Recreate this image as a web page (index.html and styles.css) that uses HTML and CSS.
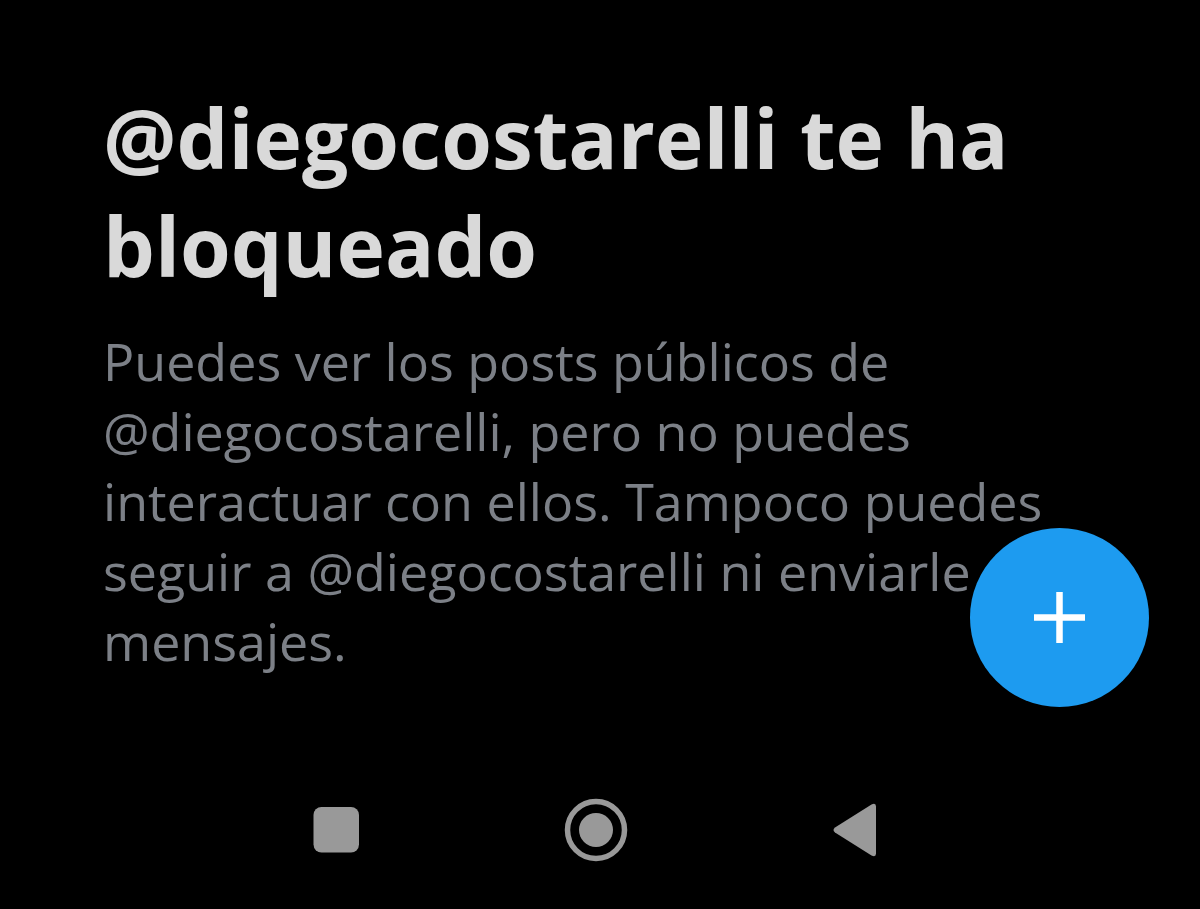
FILE: index.html
```
<!DOCTYPE html>
<html lang="es">

<head>
    <meta charset="UTF-8">
    <meta name="viewport" content="width=device-width, initial-scale=1.0">
    <title>Perfil</title>
    <link rel="stylesheet" href="styles.css">
</head>

<body>
    <main class="notice">
        <h1 class="notice-title">@diegocostarelli te ha bloqueado</h1>
        <p class="notice-text">Puedes ver los posts públicos de @diegocostarelli, pero no puedes interactuar con ellos. Tampoco puedes seguir a @diegocostarelli ni enviarle mensajes.</p>
        <button class="compose" type="button" aria-label="Nuevo post">
            <svg width="51" height="51" viewBox="0 0 51 51">
                <path d="M25.500 0v51M0 25.500h51" stroke="#fff" stroke-width="6.500" />
            </svg>
        </button>
    </main>
    <nav class="system-bar">
        <button type="button" aria-label="Recientes">
            <svg width="64" height="64" viewBox="0 0 64 64">
                <rect x="9.500" y="9" width="45.500" height="45.500" rx="8" fill="#999" />
            </svg>
        </button>
        <button type="button" aria-label="Inicio">
            <svg width="64" height="64" viewBox="0 0 64 64">
                <circle cx="32" cy="32" r="28.5" fill="none" stroke="#999" stroke-width="5.5" />
                <circle cx="32" cy="32" r="17" fill="#999" />
            </svg>
        </button>
        <button type="button" aria-label="Atrás">
            <svg width="64" height="64" viewBox="0 0 64 64">
                <path d="M11 29.5 47.500 6.500q4.500-2 4.500 2v47q0 4-4.500 2L11 34.500q-3-2.500 0-5z" fill="#999" />
            </svg>
        </button>
    </nav>
</body>

</html>
```
FILE: styles.css
```
* {
    box-sizing: border-box;
}

body {
    min-height: 100vh;
    margin: 0;
    display: flex;
    flex-direction: column;
    background-color: #000;
    font-family: "Open Sans", "Noto Sans", sans-serif;
}

.notice {
    position: relative;
    flex: 1;
    padding: 83px 103px 0;
}

.notice-title {
    margin: 0 0 27px;
    color: #d9d9d9;
    font-size: 82px;
    font-weight: 700;
    line-height: 108px;
}

.notice-text {
    margin: 0;
    color: #7c8087;
    font-size: 52px;
    line-height: 70px;
}

.compose {
    position: absolute;
    right: 51px;
    bottom: 44px;
    width: 179px;
    height: 179px;
    padding: 0;
    display: flex;
    justify-content: center;
    align-items: center;
    border: none;
    border-radius: 50%;
    background-color: #1d9bf0;
    cursor: pointer;
}

.system-bar {
    height: 158px;
    padding: 0 214px 0 206px;
    display: flex;
    justify-content: space-around;
    align-items: center;
}

.system-bar button {
    padding: 0;
    display: flex;
    border: none;
    background: none;
    cursor: pointer;
}
```
